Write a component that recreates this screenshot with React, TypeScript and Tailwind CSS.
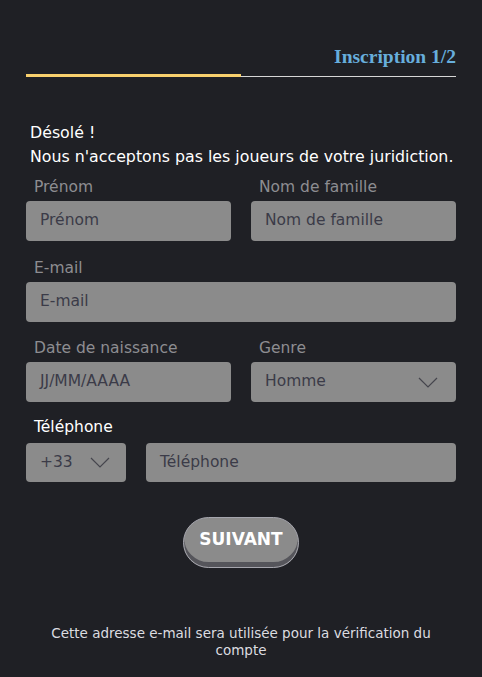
const font = { fontFamily: '"DejaVu Sans", "Noto Sans", sans-serif' };

function Chevron() {
  return (
    <svg width="20" height="11" viewBox="0 0 20 11" fill="none" className="shrink-0">
      <path d="M1 1l9 9 9-9" stroke="#45454d" strokeWidth="1.2" />
    </svg>
  );
}

function Field({ label, placeholder }: { label: string; placeholder: string }) {
  return (
    <div className="flex flex-col">
      <label className="mb-[4px] pl-2 text-[15.5px] leading-[20px] text-[#8d8d91]">{label}</label>
      <div className="flex h-[40px] items-center rounded-[4px] bg-[#8b8b8b] px-[14px] text-[15.5px] text-[#3b3b48]">
        {placeholder}
      </div>
    </div>
  );
}

function Select({ label, value }: { label: string; value: string }) {
  return (
    <div className="flex flex-col">
      <label className="mb-[4px] pl-2 text-[15.5px] leading-[20px] text-[#8d8d91]">{label}</label>
      <div className="flex h-[40px] items-center justify-between rounded-[4px] bg-[#8b8b8b] pl-[14px] pr-[18px] text-[15.5px] text-[#3b3b48]">
        {value}
        <Chevron />
      </div>
    </div>
  );
}

export default function App() {
  return (
    <div className="min-h-[677px] w-full bg-[#1f2025] px-[26px] pt-[44px]" style={font}>
      <div className="flex justify-end">
        <h1
          className="text-[19.5px] font-bold leading-[26px] text-[#67aedc]"
          style={{ fontFamily: '"Liberation Serif", serif' }}
        >
          Inscription 1/2
        </h1>
      </div>
      <div className="mt-[4px] flex items-end">
        <div className="h-[3px] w-[215px] bg-[#f8d06d]" />
        <div className="h-px flex-1 bg-[#d6d6d6]" />
      </div>

      <p className="mt-[44px] pl-1 text-[15.8px] leading-[24px] text-white">
        Désolé !
        <br />
        Nous n'acceptons pas les joueurs de votre juridiction.
      </p>

      <div className="mt-[8px] grid grid-cols-2 gap-x-5">
        <Field label="Prénom" placeholder="Prénom" />
        <Field label="Nom de famille" placeholder="Nom de famille" />
      </div>
      <div className="mt-[17px]">
        <Field label="E-mail" placeholder="E-mail" />
      </div>
      <div className="mt-[16px] grid grid-cols-2 gap-x-5">
        <Field label="Date de naissance" placeholder="JJ/MM/AAAA" />
        <Select label="Genre" value="Homme" />
      </div>

      <div className="mt-[15px] flex flex-col">
        <label className="mb-[6px] pl-2 text-[15.5px] leading-[20px] text-white">Téléphone</label>
        <div className="flex gap-5">
          <div className="flex h-[39px] w-[100px] items-center justify-between rounded-[4px] bg-[#8b8b8b] pl-[14px] pr-[16px] text-[15.5px] text-[#3b3b48]">
            +33
            <Chevron />
          </div>
          <div className="flex h-[39px] flex-1 items-center rounded-[4px] bg-[#8b8b8b] px-[14px] text-[15.5px] text-[#3b3b48]">
            Téléphone
          </div>
        </div>
      </div>

      <div className="mt-[35px] flex justify-center">
        <button className="h-[51px] w-[116px] rounded-full border border-[#a5a5ad] bg-[#8b8b8b] pb-[6px] text-[17px] font-bold text-white shadow-[inset_0_-5px_0_#55555b]">
          SUIVANT
        </button>
      </div>

      <p className="mx-auto mt-[57px] max-w-[410px] text-center text-[13.5px] leading-[17px] text-[#dcdce0]">
        Cette adresse e-mail sera utilisée pour la vérification du compte
      </p>
    </div>
  );
}
